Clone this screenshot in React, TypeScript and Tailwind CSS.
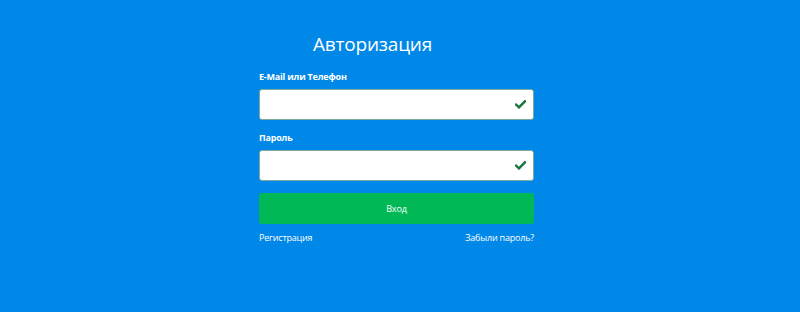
import React from 'react';

function Check() {
  return (
    <svg className="w-[11px] h-[9px]" viewBox="0 0 11 9" fill="none">
      <path d="M1 4.6 L4 7.4 L10 1.2" stroke="#17763a" strokeWidth={2.4} strokeLinecap="square" />
    </svg>
  );
}

function Field({ label, type }: { label: string; type: string }) {
  return (
    <div className="flex flex-col">
      <label className="text-[9px] leading-[14px] font-bold tracking-[-0.2px] text-white mb-[5px]">{label}</label>
      <div className="relative h-[31px] bg-white border border-[#7fa9a0] rounded-[3px] flex items-center justify-end pr-[7px]">
        <input type={type} className="absolute inset-0 w-full h-full bg-transparent outline-none px-2 text-sm" />
        <Check />
      </div>
    </div>
  );
}

export default function App() {
  return (
    <div
      className="w-full h-[312px] bg-[#0088e8] flex justify-center pr-[7px]"
      style={{ fontFamily: '"Open Sans", "Liberation Sans", sans-serif' }}
    >
      <div className="w-[275px] flex flex-col pt-[30px]">
        <h1 className="text-[19px] leading-[28px] tracking-[-0.2px] text-white pl-[54px] mb-[12px]">Авторизация</h1>
        <Field label="E-Mail или Телефон" type="text" />
        <div className="h-[11px]" />
        <Field label="Пароль" type="password" />
        <button className="mt-[12px] h-[31px] bg-[#00b956] rounded-[3px] text-white text-[9px] tracking-[-0.1px]">Вход</button>
        <div className="mt-[7px] flex justify-between text-[9px] leading-[14px] tracking-[-0.2px] text-white">
          <a href="#">Регистрация</a>
          <a href="#">Забыли пароль?</a>
        </div>
      </div>
    </div>
  );
}
